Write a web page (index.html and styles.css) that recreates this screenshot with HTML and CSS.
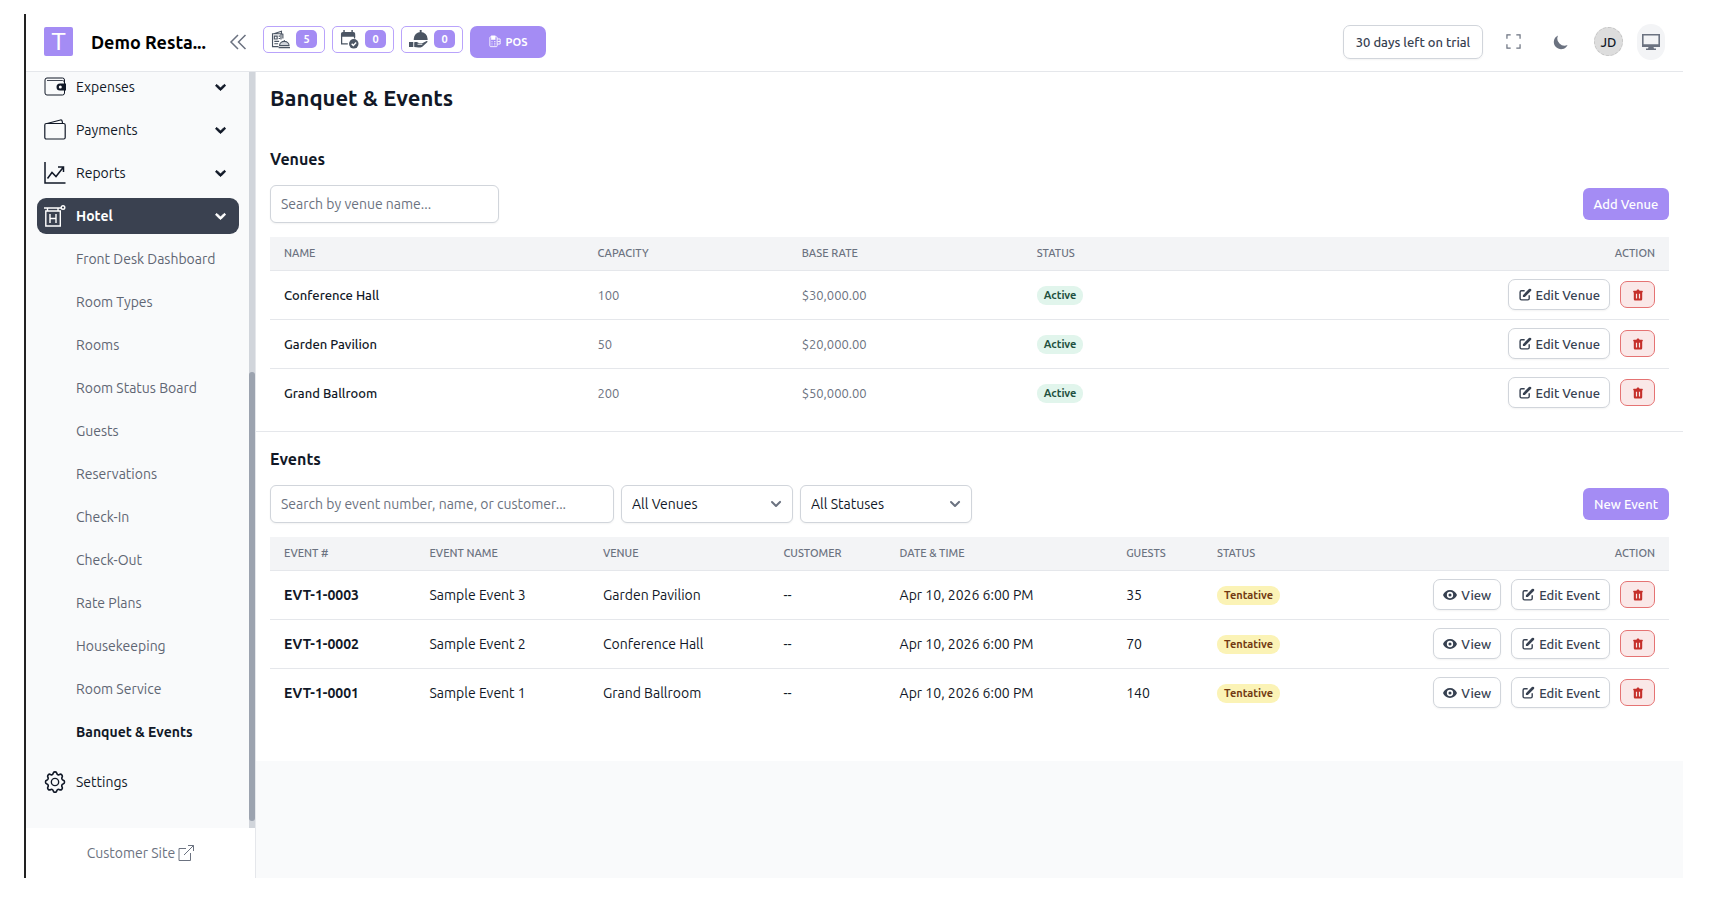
FILE: index.html
```
<!DOCTYPE html>
<html lang="en">
<head>
    <meta charset="UTF-8">
    <meta name="viewport" content="width=device-width, initial-scale=1.0">
    <title>Banquet &amp; Events</title>
    <link rel="stylesheet" href="styles.css">
</head>
<body>

<!-- Shared icons -->
<svg class="sprite" aria-hidden="true">
    <symbol id="chevron" viewBox="0 0 20 20"><path fill="currentColor" d="M5.3 7.3a1 1 0 0 1 1.4 0L10 10.6l3.3-3.3a1 1 0 1 1 1.4 1.4l-4 4a1 1 0 0 1-1.4 0l-4-4a1 1 0 0 1 0-1.4z"/></symbol>
    <symbol id="edit" viewBox="0 0 20 20"><path fill="none" stroke="currentColor" stroke-width="2" d="M9.5 4H5a2 2 0 0 0-2 2v9a2 2 0 0 0 2 2h9a2 2 0 0 0 2-2v-4.500"/><path fill="currentColor" d="M18.400 1.600a2 2 0 0 0-2.800 0L7 10.200V13h2.800l8.600-8.600a2 2 0 0 0 0-2.800z"/></symbol>
    <symbol id="trash" viewBox="0 0 20 20"><path fill="currentColor" fill-rule="evenodd" d="M9 1a1 1 0 0 0-.9.600L7.400 3H3a1 1 0 0 0-1 1v1.500h1V17a2 2 0 0 0 2 2h10a2 2 0 0 0 2-2V5.500h1V4a1 1 0 0 0-1-1h-4.400l-.7-1.400A1 1 0 0 0 11 1H9zM6.500 8h2v8h-2zM11.500 8h2v8h-2z"/></symbol>
    <symbol id="eye" viewBox="0 0 20 20"><path fill="currentColor" fill-rule="evenodd" d="M0 10c1.500-4 5.500-7 10-7s8.500 3 10 7c-1.500 4-5.500 7-10 7S1.500 14 0 10zm14.500 0a4.500 4.500 0 1 0-9 0 4.500 4.500 0 0 0 9 0zM10 12.200a2.200 2.200 0 1 0 0-4.400 2.200 2.200 0 0 0 0 4.400z"/></symbol>
</svg>

<div class="app">
    <header class="topbar">
        <div class="brand">
            <span class="brand-logo">T</span>
            <span class="brand-name">Demo Resta...</span>
            <button class="icon-button collapse" aria-label="Collapse sidebar">
                <svg viewBox="0 0 18 18"><path fill="none" stroke="currentColor" stroke-width="1.500" d="M9 2 2 9l7 7M16.500 2l-7 7 7 7"/></svg>
            </button>
        </div>
        <div class="shortcuts">
            <a class="shortcut" href="#" aria-label="Orders">
                <svg viewBox="0 0 20 20"><g fill="none" stroke="currentColor" stroke-width="1.200"><path d="M8 17.500H1.600V4h8.900v6M3 4l8-2.700V4l1.500.500V9M3.500 6.500h3v3h-3zM8 6.500h1.500M8 9h1.500M3.500 12h5M3.500 14.500h4"/><path fill="#d1d5db" d="M9 16.500a5 4.500 0 0 1 10 0zM14 12v-1.500M8 18.500h12"/></g></svg>
                <span class="count">5</span>
            </a>
            <a class="shortcut" href="#" aria-label="Reservations">
                <svg viewBox="0 0 20 20"><path fill="currentColor" d="M1 4a2 2 0 0 1 2-2h11a2 2 0 0 1 2 2v3H1zM3.500 0H5v3H3.500zM12 0h1.500v3H12z"/><path fill="none" stroke="currentColor" stroke-width="1.300" d="M1.700 6v8.500h6.500M15.300 6v3"/><circle cx="14.500" cy="14.500" r="5" fill="currentColor"/><path fill="none" stroke="#fff" stroke-width="1.500" d="m12.300 14.500 1.700 1.700 3-3"/></svg>
                <span class="count">0</span>
            </a>
            <a class="shortcut" href="#" aria-label="Waiter requests">
                <svg viewBox="0 0 20 20"><path fill="currentColor" d="M5 9.500a7.300 7.300 0 0 1 14.600 0v1H5zM11.300 0h2v3h-2zM0 12.500h4.500v5.500H0zM5.500 13c2.500-1 4 0 5 1h3.500l4.500-2.500c1 0 1.300.700.7 1.300L14 17.500c-2 1.300-5 1-8.500.500z"/><path stroke="#fff" d="M9 15h5"/></svg>
                <span class="count">0</span>
            </a>
            <a class="pos-button" href="#">
                <svg viewBox="0 0 14 14"><g fill="none" stroke="currentColor"><rect x="1" y="1.500" width="8.500" height="11.500" rx="1"/><path d="M9.500 4H13v6H9.500M10 7h3M3 7h1M6 7h1.500M3 9h1M6 9h1.500M3 11h1M6 11h1.500"/></g><path fill="currentColor" d="M2.500 0h5v5h-5z"/></svg>
                POS
            </a>
        </div>
        <div class="topbar-right">
            <a class="trial" href="#">30 days left on trial</a>
            <button class="icon-button fullscreen" aria-label="Fullscreen">
                <svg viewBox="0 0 16 16"><path fill="none" stroke="currentColor" stroke-width="1.300" d="M1 5V1h4M11 1h4v4M15 11v4h-4M5 15H1v-4"/></svg>
            </button>
            <button class="icon-button moon" aria-label="Dark mode">
                <svg viewBox="0 0 20 20"><path fill="currentColor" d="M17.300 13.300A8 8 0 0 1 6.700 2.700a8 8 0 1 0 10.600 10.600z"/></svg>
            </button>
            <button class="avatar" aria-label="Account">JD</button>
            <button class="icon-button display" aria-label="Customer display">
                <svg viewBox="0 0 18 16"><path fill="none" stroke="currentColor" stroke-width="1.600" d="M.8.800h16.400v10.400H.8z"/><path fill="currentColor" d="M0 10.400h18V13h-6.500l.5 1.500h2V16H4v-1.500h2l.5-1.500H0z"/></svg>
            </button>
        </div>
    </header>

    <div class="layout">
        <aside class="sidebar">
            <div class="sidebar-scroll">
                <nav class="menu">
                    <a class="menu-item" href="#">
                        <svg class="menu-icon" viewBox="0 0 22 22"><rect x="1" y="2" width="19.500" height="17" rx="2" fill="none" stroke="currentColor"/><path fill="none" stroke="currentColor" stroke-width=".8" d="M3 4.500h15.500q2 0 2 2.500"/><path fill="currentColor" d="M16 7.500h6v7h-6a3.500 3.500 0 0 1 0-7z"/><circle cx="16.300" cy="11" r="1.500" fill="#fff"/></svg>
                        Expenses
                        <svg class="menu-chevron"><use href="#chevron"/></svg>
                    </a>
                    <a class="menu-item" href="#">
                        <svg class="menu-icon" viewBox="0 0 22 22"><g fill="none" stroke="currentColor" stroke-width="1.200"><rect x=".8" y="4.500" width="20.400" height="15.500" rx="1.500"/><path d="M3 4.500 16.500 1q1.500-.2 1.700 1.300l.4 2.200"/></g></svg>
                        Payments
                        <svg class="menu-chevron"><use href="#chevron"/></svg>
                    </a>
                    <a class="menu-item" href="#">
                        <svg class="menu-icon" viewBox="0 0 22 22"><path fill="none" stroke="currentColor" stroke-width="1.500" d="M1 0v21h20.500M3.500 16.500 8 10.500l4 4L19.500 5M14 5h5.500v5"/></svg>
                        Reports
                        <svg class="menu-chevron"><use href="#chevron"/></svg>
                    </a>
                    <a class="menu-item open" href="#">
                        <svg class="menu-icon" viewBox="0 0 22 22"><g fill="none" stroke="currentColor" stroke-width="1.400"><path d="M0 3h17M3.500 3v3M14 3v3M1.800 6h14.500v15H1.800zM6 9v9M12 9v9M6 13.500h6"/><circle cx="19" cy="2.500" r="1.800"/></g></svg>
                        Hotel
                        <svg class="menu-chevron"><use href="#chevron"/></svg>
                    </a>
                    <a class="menu-item sub" href="#">Front Desk Dashboard</a>
                    <a class="menu-item sub" href="#">Room Types</a>
                    <a class="menu-item sub" href="#">Rooms</a>
                    <a class="menu-item sub" href="#">Room Status Board</a>
                    <a class="menu-item sub" href="#">Guests</a>
                    <a class="menu-item sub" href="#">Reservations</a>
                    <a class="menu-item sub" href="#">Check-In</a>
                    <a class="menu-item sub" href="#">Check-Out</a>
                    <a class="menu-item sub" href="#">Rate Plans</a>
                    <a class="menu-item sub" href="#">Housekeeping</a>
                    <a class="menu-item sub" href="#">Room Service</a>
                    <a class="menu-item sub current" href="#">Banquet &amp; Events</a>
                    <a class="menu-item settings" href="#">
                        <svg class="menu-icon" viewBox="0 0 24 24"><g fill="none" stroke="currentColor" stroke-width="1.500" stroke-linejoin="round"><path d="M10.300 3.300c.4-1.700 3-1.700 3.400 0a1.700 1.700 0 0 0 2.600 1.100c1.500-1 3.300.800 2.400 2.400a1.700 1.700 0 0 0 1 2.500c1.800.4 1.800 3 0 3.400a1.700 1.700 0 0 0-1 2.600c.9 1.500-.9 3.300-2.400 2.400a1.700 1.700 0 0 0-2.600 1c-.4 1.800-3 1.800-3.400 0a1.700 1.700 0 0 0-2.600-1c-1.500.9-3.300-.9-2.400-2.400a1.700 1.700 0 0 0-1-2.600c-1.800-.4-1.800-3 0-3.400a1.700 1.700 0 0 0 1-2.500c-.9-1.600.9-3.400 2.400-2.400 1 .6 2.300.1 2.600-1.100z" transform="translate(-1.800 -1.600) scale(1.150 1.240)"/><circle cx="12" cy="12" r="4"/></g></svg>
                        Settings
                    </a>
                </nav>
                <div class="scrollbar"><div class="scrollbar-thumb"></div></div>
            </div>
            <a class="customer-site" href="#">Customer Site
                <svg viewBox="0 0 16 16"><path fill="none" stroke="currentColor" d="M8 3.500H1v12h11.500V8M10 .5h5.500V6M15.500.500 6 10"/></svg>
            </a>
        </aside>

        <main class="content">
            <section class="panel venues">
                <h1>Banquet &amp; Events</h1>
                <h2>Venues</h2>
                <div class="toolbar">
                    <input class="field search-venue" type="text" aria-label="Search venues" placeholder="Search by venue name...">
                    <button class="primary">Add Venue</button>
                </div>
                <table class="table venue-table">
                    <thead>
                        <tr><th class="v-name">Name</th><th class="v-capacity">Capacity</th><th class="v-rate">Base Rate</th><th>Status</th><th>Action</th></tr>
                    </thead>
                    <tbody>
                        <tr>
                            <td class="name">Conference Hall</td><td>100</td><td>$30,000.00</td><td><span class="badge active">Active</span></td>
                            <td><div class="actions"><button class="secondary"><svg><use href="#edit"/></svg>Edit Venue</button><button class="danger" aria-label="Delete"><svg><use href="#trash"/></svg></button></div></td>
                        </tr>
                        <tr>
                            <td class="name">Garden Pavilion</td><td>50</td><td>$20,000.00</td><td><span class="badge active">Active</span></td>
                            <td><div class="actions"><button class="secondary"><svg><use href="#edit"/></svg>Edit Venue</button><button class="danger" aria-label="Delete"><svg><use href="#trash"/></svg></button></div></td>
                        </tr>
                        <tr>
                            <td class="name">Grand Ballroom</td><td>200</td><td>$50,000.00</td><td><span class="badge active">Active</span></td>
                            <td><div class="actions"><button class="secondary"><svg><use href="#edit"/></svg>Edit Venue</button><button class="danger" aria-label="Delete"><svg><use href="#trash"/></svg></button></div></td>
                        </tr>
                    </tbody>
                </table>
            </section>

            <section class="panel events">
                <h2>Events</h2>
                <div class="toolbar">
                    <input class="field search-event" type="text" aria-label="Search events" placeholder="Search by event number, name, or customer...">
                    <div class="select-wrap">
                        <select class="field" aria-label="Venue"><option>All Venues</option></select>
                        <svg><use href="#chevron"/></svg>
                    </div>
                    <div class="select-wrap">
                        <select class="field" aria-label="Status"><option>All Statuses</option></select>
                        <svg><use href="#chevron"/></svg>
                    </div>
                    <button class="primary">New Event</button>
                </div>
                <table class="table event-table">
                    <thead>
                        <tr><th class="e-number">Event #</th><th class="e-name">Event Name</th><th class="e-venue">Venue</th><th class="e-customer">Customer</th><th class="e-date">Date &amp; Time</th><th class="e-guests">Guests</th><th class="e-status">Status</th><th>Action</th></tr>
                    </thead>
                    <tbody>
                        <tr>
                            <td class="name">EVT-1-0003</td><td>Sample Event 3</td><td>Garden Pavilion</td><td>--</td><td>Apr 10, 2026 6:00 PM</td><td>35</td><td><span class="badge tentative">Tentative</span></td>
                            <td><div class="actions"><button class="secondary"><svg><use href="#eye"/></svg>View</button><button class="secondary"><svg><use href="#edit"/></svg>Edit Event</button><button class="danger" aria-label="Delete"><svg><use href="#trash"/></svg></button></div></td>
                        </tr>
                        <tr>
                            <td class="name">EVT-1-0002</td><td>Sample Event 2</td><td>Conference Hall</td><td>--</td><td>Apr 10, 2026 6:00 PM</td><td>70</td><td><span class="badge tentative">Tentative</span></td>
                            <td><div class="actions"><button class="secondary"><svg><use href="#eye"/></svg>View</button><button class="secondary"><svg><use href="#edit"/></svg>Edit Event</button><button class="danger" aria-label="Delete"><svg><use href="#trash"/></svg></button></div></td>
                        </tr>
                        <tr>
                            <td class="name">EVT-1-0001</td><td>Sample Event 1</td><td>Grand Ballroom</td><td>--</td><td>Apr 10, 2026 6:00 PM</td><td>140</td><td><span class="badge tentative">Tentative</span></td>
                            <td><div class="actions"><button class="secondary"><svg><use href="#eye"/></svg>View</button><button class="secondary"><svg><use href="#edit"/></svg>Edit Event</button><button class="danger" aria-label="Delete"><svg><use href="#trash"/></svg></button></div></td>
                        </tr>
                    </tbody>
                </table>
            </section>
        </main>
    </div>
</div>

</body>
</html>
```
FILE: styles.css
```
* {
    box-sizing: border-box;
}
body {
    margin: 0;
    padding: 14px 27px 22px 24px;
    background: #fff;
    color: #111827;
    font-family: Ubuntu, "Noto Sans", "Open Sans", sans-serif;
    font-size: 14px;
    line-height: 20px;
}
a {
    color: inherit;
    text-decoration: none;
}
button, input, select {
    font: inherit;
    color: inherit;
}
button {
    cursor: pointer;
}
.sprite {
    display: none;
}
.app {
    display: flex;
    flex-direction: column;
    height: calc(100vh - 36px);
    border-left: 2px solid #222;
    overflow: hidden;
}

/* Top bar */
.topbar {
    display: flex;
    align-items: center;
    flex: none;
    height: 58px;
    padding: 0 18px 2px;
    border-bottom: 1px solid #e5e7eb;
}
.brand {
    display: flex;
    align-items: center;
    width: 203px;
}
.brand-logo {
    display: flex;
    align-items: center;
    justify-content: center;
    width: 29px;
    height: 29px;
    margin-right: 18px;
    border-radius: 2px;
    background: #a48cf4;
    color: #fff;
    font-family: "Liberation Sans", Arial, sans-serif;
    font-size: 24px;
}
.brand-name {
    color: #000;
    font-size: 18px;
    font-weight: 600;
    white-space: nowrap;
}
.icon-button {
    display: flex;
    align-items: center;
    justify-content: center;
    padding: 0;
    border: 0;
    background: none;
    color: #6b7280;
}
.collapse {
    margin-left: auto;
}
.collapse svg {
    width: 18px;
    height: 18px;
}
.shortcuts {
    display: flex;
    align-items: flex-start;
    gap: 7px;
    margin-left: 16px;
}
.shortcut {
    display: flex;
    align-items: center;
    justify-content: space-between;
    width: 62px;
    height: 27px;
    padding: 0 7px;
    border: 1px solid #b9a3fb;
    border-radius: 5px;
    color: #4b5563;
}
.shortcut svg {
    width: 19px;
    height: 19px;
}
.count {
    width: 21px;
    border-radius: 5px;
    background: #a48cf4;
    color: #fff;
    font-size: 11px;
    line-height: 18px;
    font-weight: 600;
    text-align: center;
}
.pos-button {
    display: flex;
    align-items: center;
    justify-content: center;
    gap: 5px;
    width: 76px;
    height: 32px;
    border-radius: 7px;
    background: #a48cf4;
    color: #fff;
    font-size: 11px;
    font-weight: 600;
}
.pos-button svg {
    width: 12px;
    height: 13px;
}
.topbar-right {
    display: flex;
    align-items: center;
    margin-left: auto;
}
.trial {
    width: 140px;
    padding: 6px 0;
    border: 1px solid #d1d5db;
    border-radius: 7px;
    color: #374151;
    font-size: 13px;
    font-weight: 500;
    text-align: center;
    white-space: nowrap;
    box-shadow: 0 1px 2px rgba(0, 0, 0, 0.05);
}
.fullscreen {
    margin-left: 23px;
}
.fullscreen svg {
    width: 15px;
    height: 15px;
}
.moon {
    margin-left: 31px;
}
.moon svg {
    width: 18px;
    height: 18px;
}
.avatar {
    width: 29px;
    height: 29px;
    margin-left: 24px;
    padding: 0;
    border: 1px dashed #c4c4c4;
    border-radius: 50%;
    background: #ddd;
    font-size: 13px;
    font-weight: 500;
}
.display {
    width: 28px;
    height: 36px;
    margin-left: 14px;
    border-radius: 14px;
    background: #f3f4f6;
}
.display svg {
    width: 18px;
    height: 16px;
}

/* Sidebar */
.layout {
    display: flex;
    flex: 1;
    min-height: 0;
}
.sidebar {
    display: flex;
    flex-direction: column;
    flex: none;
    width: 230px;
    border-right: 1px solid #e5e7eb;
}
.sidebar-scroll {
    display: flex;
    flex: 1;
    min-height: 0;
    background: #f9fafb;
}
.menu {
    display: flex;
    flex: 1;
    flex-direction: column;
    justify-content: flex-end;
    gap: 7px;
    padding: 0 10px 28px 11px;
    overflow: hidden;
}
.menu-item {
    display: flex;
    flex: none;
    align-items: center;
    height: 36px;
    padding: 0 9px 0 7px;
    border-radius: 9px;
    color: #111827;
}
.menu-icon {
    width: 22px;
    height: 22px;
    margin-right: 10px;
}
.menu-chevron {
    width: 19px;
    height: 19px;
    margin-left: auto;
    stroke: currentColor;
    stroke-width: 1;
}
.open {
    background: #3a4150;
    color: #fff;
    font-weight: 600;
}
.sub {
    padding-left: 39px;
    color: #5f6673;
}
.current {
    color: #111827;
    font-weight: 700;
}
.settings {
    margin-top: 7px;
}
.scrollbar {
    display: flex;
    align-items: flex-end;
    width: 6px;
    padding-bottom: 7px;
    background: #d1d5db;
}
.scrollbar-thumb {
    width: 100%;
    height: 60%;
    border-radius: 3px;
    background: #9ca3af;
}
.customer-site {
    display: flex;
    align-items: center;
    justify-content: center;
    gap: 3px;
    height: 50px;
    color: #6b7280;
}
.customer-site svg {
    width: 16px;
    height: 16px;
}

/* Content */
.content {
    flex: 1;
    min-width: 0;
    background: #f9fafb;
}
.panel {
    padding: 14px;
    background: #fff;
}
.venues {
    padding-top: 12px;
    border-bottom: 1px solid #e5e7eb;
}
.events {
    padding-bottom: 44px;
}
h1 {
    margin: 0 0 34px;
    font-size: 22px;
    line-height: 28px;
    font-weight: 600;
}
h2 {
    margin: 0 0 13px;
    font-size: 16px;
    line-height: 26px;
    font-weight: 600;
}
.toolbar {
    display: flex;
    align-items: center;
    gap: 7px;
    margin-bottom: 14px;
}
.field {
    height: 38px;
    padding: 0 10px;
    border: 1px solid #d1d5db;
    border-radius: 6px;
    background: #fff;
    box-shadow: 0 1px 2px rgba(0, 0, 0, 0.05);
}
.field::placeholder {
    color: #6b7280;
    opacity: 1;
}
.search-venue {
    width: 229px;
}
.search-event {
    width: 344px;
}
.select-wrap {
    position: relative;
    width: 172px;
}
.select-wrap select {
    width: 100%;
    appearance: none;
}
.select-wrap svg {
    position: absolute;
    top: 9px;
    right: 7px;
    width: 20px;
    height: 20px;
    color: #6b7280;
    pointer-events: none;
}
.primary {
    width: 86px;
    height: 32px;
    margin-left: auto;
    padding: 0;
    border: 0;
    border-radius: 6px;
    background: #a48cf4;
    color: #fff;
    font-size: 13px;
    font-weight: 500;
}
.table {
    width: 100%;
    border-collapse: collapse;
    table-layout: fixed;
}
th {
    height: 33px;
    padding: 0 14px;
    border-bottom: 1px solid #e5e7eb;
    background: #f3f4f6;
    color: #6b7280;
    font-size: 11px;
    font-weight: 500;
    text-align: left;
    text-transform: uppercase;
}
th:last-child {
    text-align: right;
}
td {
    height: 49px;
    padding: 0 14px;
    border-bottom: 1px solid #e5e7eb;
    white-space: nowrap;
}
tr:last-child td {
    border-bottom: 0;
}
.venue-table td {
    color: #6b7280;
    font-size: 13px;
}
.venue-table .name {
    color: #111827;
    font-weight: 500;
}
.event-table .name {
    font-weight: 700;
}
.v-name {
    width: 22.4%;
}
.v-capacity {
    width: 14.6%;
}
.v-rate {
    width: 16.8%;
}
.e-number {
    width: 10.4%;
}
.e-name {
    width: 12.4%;
}
.e-venue {
    width: 12.9%;
}
.e-customer {
    width: 8.3%;
}
.e-date {
    width: 16.2%;
}
.e-guests {
    width: 6.5%;
}
.e-status {
    width: 8%;
}
.badge {
    display: inline-block;
    padding: 0 7px;
    border-radius: 9px;
    font-size: 11px;
    line-height: 19px;
    font-weight: 600;
}
.venue-table .active {
    background: #e1f5ec;
    color: #1f5140;
}
.tentative {
    background: #fbf3b6;
    color: #723b13;
}
.actions {
    display: flex;
    align-items: center;
    justify-content: flex-end;
    gap: 10px;
}
.secondary {
    display: flex;
    align-items: center;
    gap: 4px;
    height: 31px;
    padding: 0 9px;
    border: 1px solid #d1d5db;
    border-radius: 7px;
    background: #fff;
    color: #374151;
    font-size: 13px;
    font-weight: 500;
    box-shadow: 0 1px 2px rgba(0, 0, 0, 0.05);
}
.secondary svg {
    width: 14px;
    height: 14px;
}
.danger {
    display: flex;
    align-items: center;
    justify-content: center;
    width: 35px;
    height: 27px;
    padding: 0;
    border: 1px solid #e57373;
    border-radius: 7px;
    background: #fae8e8;
    color: #c5302b;
}
.danger svg {
    width: 12px;
    height: 12px;
}
```
